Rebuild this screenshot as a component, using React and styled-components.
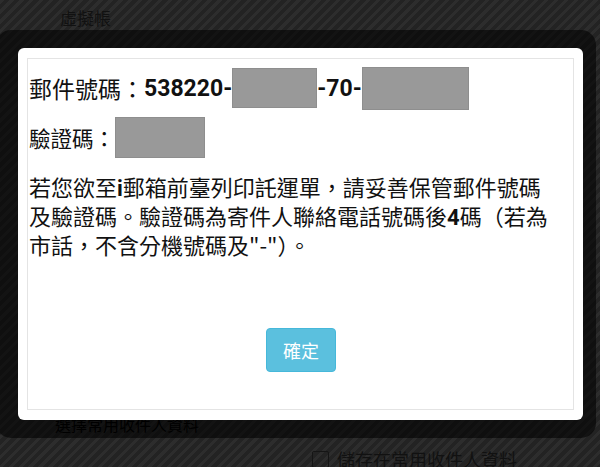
import React from 'react'
import styled, { createGlobalStyle } from 'styled-components'

const GlobalStyle = createGlobalStyle`
  html, body {
    margin: 0;
    padding: 0;
  }
  body {
    background: repeating-linear-gradient(135deg, #2d2d2d 0 3px, #232323 3px 7px);
    font-family: "Noto Sans CJK TC", "Noto Sans", sans-serif;
  }
`

const Page = styled.div`
  position: relative;
  width: 600px;
  height: 467px;
  overflow: hidden;
  box-sizing: border-box;
  padding-top: 8px;
`

const TopLabel = styled.div`
  margin-left: 60px;
  font-size: 17px;
  line-height: 20px;
  color: #111;
`

const SubLabel = styled.div`
  margin-top: 386px;
  margin-left: 55px;
  font-size: 16px;
  line-height: 20px;
  color: #000;
`

const CheckRow = styled.label`
  display: flex;
  align-items: center;
  gap: 8px;
  margin-top: 14px;
  margin-left: 312px;
  font-size: 18px;
  line-height: 22px;
  color: #111;
`

const CheckBox = styled.span`
  width: 15px;
  height: 15px;
  border: 1px solid #151515;
  border-radius: 2px;
`

/* dim frame that lies over the form */
const Overlay = styled.div`
  position: absolute;
  top: 30px;
  left: -4px;
  width: 600px;
  height: 408px;
  box-sizing: border-box;
  padding: 18px 13px 18px 22px;
  border-radius: 15px;
  background: rgba(0, 0, 0, 0.56);
  display: flex;
`

const Dialog = styled.div`
  flex: 1;
  display: flex;
  box-sizing: border-box;
  padding: 10px 9px;
  background: #fff;
  border-radius: 6px;
`

const Inner = styled.div`
  flex: 1;
  display: flex;
  flex-direction: column;
  border: 1px solid #e4e4e4;
  padding: 7px 0 0 1px;
  color: #111;
  font-size: 22px;
`

const Row = styled.div`
  display: flex;
  align-items: center;
  height: ${p => p.$h || 44}px;
  margin-bottom: ${p => p.$gap || 0}px;
  font-size: ${p => p.$size || 23}px;
  white-space: nowrap;
`

const Latin = styled.span`
  font-family: Roboto, "Noto Sans CJK TC", sans-serif;
  font-weight: 700;
`

const Hidden = styled.span`
  display: inline-block;
  width: ${p => p.$w}px;
  height: ${p => p.$h}px;
  background: #999;
  border: 1px solid #8e8e8e;
  box-sizing: border-box;
`

const Note = styled.p`
  margin: 13px 0 0;
  font-size: 22px;
  line-height: 27px;
`

const Footer = styled.div`
  display: flex;
  justify-content: center;
  margin-top: 70px;
`

const OkButton = styled.button`
  height: 44px;
  padding: 0 16px;
  border: 1px solid #46b8da;
  border-radius: 4px;
  background: #5bc0de;
  color: #fff;
  font-family: "Noto Sans CJK TC", sans-serif;
  font-size: 18px;
`

export default function App() {
  return (
    <>
      <GlobalStyle />
      <Page>
        <TopLabel>虛擬帳</TopLabel>
        <SubLabel>選擇常用收件人資料</SubLabel>
        <CheckRow>
          <CheckBox />
          儲存在常用收件人資料
        </CheckRow>

        <Overlay>
          <Dialog>
            <Inner>
              <Row $gap={5}>
                郵件號碼：<Latin>538220-</Latin>
                <Hidden $w={85} $h={40} />
                <Latin>-70-</Latin>
                <Hidden $w={107} $h={43} />
              </Row>
              <Row $h={45} $size={21.5}>
                驗證碼：<Hidden $w={90} $h={41} />
              </Row>
              <Note>
                若您欲至<Latin>i</Latin>郵箱前臺列印託運單，請妥善保管郵件號碼<br />
                及驗證碼。驗證碼為寄件人聯絡電話號碼後<Latin>4</Latin>碼（若為<br />
                市話，不含分機號碼及"-"）。
              </Note>
              <Footer>
                <OkButton>確定</OkButton>
              </Footer>
            </Inner>
          </Dialog>
        </Overlay>
      </Page>
    </>
  )
}
